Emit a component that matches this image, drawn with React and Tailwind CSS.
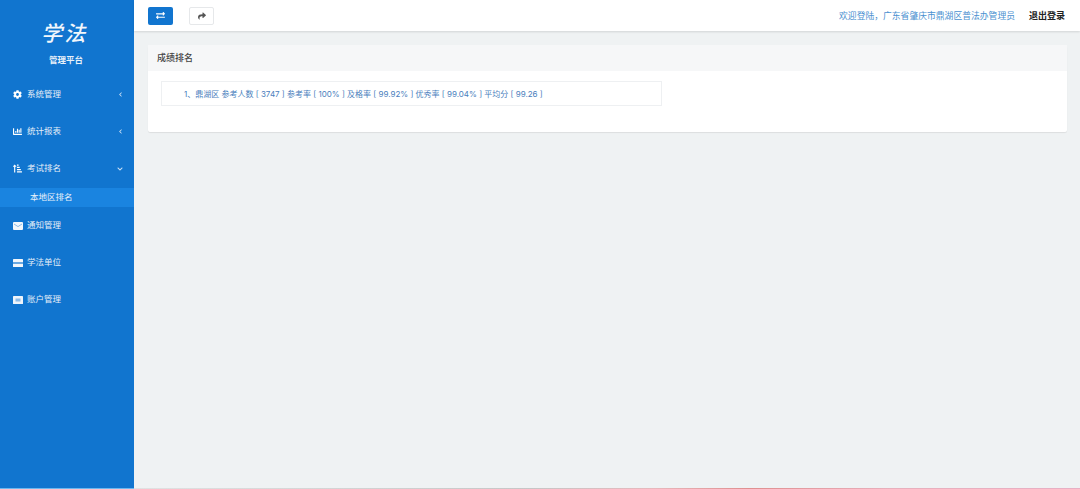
import { FaCog, FaChartBar, FaSortAmountUpAlt, FaChevronLeft, FaChevronDown, FaExchangeAlt, FaShare } from "react-icons/fa";

const cjk = "font-['Inter','Noto_Sans_CJK_SC',sans-serif]";

function MailIcon() {
  return (
    <svg width="10" height="8" viewBox="0 0 10 8">
      <rect width="10" height="8" rx="1" fill="#f2f7fc" />
      <path d="M1 2l4 2.6L9 2" fill="none" stroke="#7fb2e3" strokeWidth="0.9" />
    </svg>
  );
}

function CardIcon() {
  return (
    <svg width="10" height="8" viewBox="0 0 10 8">
      <rect width="10" height="8" rx="0.6" fill="#f2f7fc" />
      <rect y="3.4" width="10" height="1.2" fill="#1175cf" />
    </svg>
  );
}

function AccountIcon() {
  return (
    <svg width="10" height="8" viewBox="0 0 10 8">
      <rect width="10" height="8" rx="0.6" fill="#eef4fb" />
      <rect x="2.5" y="2.5" width="5" height="3" fill="#8dbbe8" />
    </svg>
  );
}

function NavItem({ icon, label, arrow }) {
  return (
    <div className="flex h-[37px] items-center pl-[13px] pr-[11px] text-[8.5px] text-[#e4eef8]">
      <span className="flex w-[14px] justify-start text-[9px] text-white">{icon}</span>
      <span className="flex-1">{label}</span>
      {arrow === "left" && <FaChevronLeft className="text-[5px] text-[#cfe2f5]" />}
      {arrow === "down" && <FaChevronDown className="text-[6px] text-[#cfe2f5]" />}
    </div>
  );
}

export default function App() {
  return (
    <div className={`flex h-[489px] w-[1080px] overflow-hidden bg-[#eff2f3] ${cjk}`}>
      <aside className="flex h-[489px] w-[134px] shrink-0 flex-col border-b border-[#6db8f0] bg-[#1175cf]">
        <div className="flex h-[76px] flex-col items-center pt-[18px] pr-[2px]">
          <div className="skew-x-[-14deg] text-[21px] leading-[32px] font-medium tracking-[2px] text-[#f2f7fc]">学法</div>
          <div className="mt-[4px] text-[8.5px] leading-[12px] font-bold text-[#e8f1fa]">管理平台</div>
        </div>
        <NavItem icon={<FaCog />} label="系统管理" arrow="left" />
        <NavItem icon={<FaChartBar />} label="统计报表" arrow="left" />
        <NavItem icon={<FaSortAmountUpAlt />} label="考试排名" arrow="down" />
        <div className="mt-[1px] flex h-[19px] items-center bg-[#1a84e0] pl-[30px] text-[8.5px] text-[#e8f1fa]">本地区排名</div>
        <NavItem icon={<MailIcon />} label="通知管理" />
        <NavItem icon={<CardIcon />} label="学法单位" />
        <NavItem icon={<AccountIcon />} label="账户管理" />
      </aside>

      <div className="flex min-w-0 flex-1 flex-col">
        <header className="flex h-[31px] shrink-0 items-center justify-between bg-white pr-[15px] pl-[14px] shadow-[0_1px_2px_rgba(0,0,0,0.12)]">
          <div className="flex items-center gap-4">
            <button className="flex h-[18px] w-[25px] items-center justify-center rounded-[2px] bg-[#1175cf] text-[9px] text-white">
              <FaExchangeAlt />
            </button>
            <button className="flex h-[18px] w-[25px] items-center justify-center rounded-[2px] border border-[#e6e8ea] bg-white text-[8px] text-[#555]">
              <FaShare />
            </button>
          </div>
          <div className="flex items-center gap-[14px] text-[8.8px]">
            <span className="text-[#4a90d0]">欢迎登陆，广东省肇庆市鼎湖区普法办管理员</span>
            <span className="text-[9px] font-bold text-[#222]">退出登录</span>
          </div>
        </header>

        <main className="flex-1 pt-[14px] pr-[13px] pl-[14px]">
          <section className="h-[87px] rounded-[2px] bg-white shadow-[0_1px_1px_rgba(0,0,0,0.08)]">
            <div className="flex h-[26px] items-center bg-[#f6f7f8] pl-[9px] text-[9px] font-medium text-[#444]">成绩排名</div>
            <div className="pt-[10px] pl-[13px]">
              <div className="flex h-[25px] w-[501px] items-center border border-[#eef0f2] pl-[22px] text-[8px] text-[#4a80bd]">
                1、鼎湖区 参考人数 [ 3747 ] 参考率 [ 100% ] 及格率 [ 99.92% ] 优秀率 [ 99.04% ] 平均分 [ 99.26 ]
              </div>
            </div>
          </section>
        </main>
        <div className="h-[1px] shrink-0 bg-[linear-gradient(90deg,#e0e2e2_0%,#c6c6c6_42%,#e8b8bc_55%,#df9090_65%,#e8b0bc_80%,#e8b0c4_100%)]" />
      </div>
    </div>
  );
}
